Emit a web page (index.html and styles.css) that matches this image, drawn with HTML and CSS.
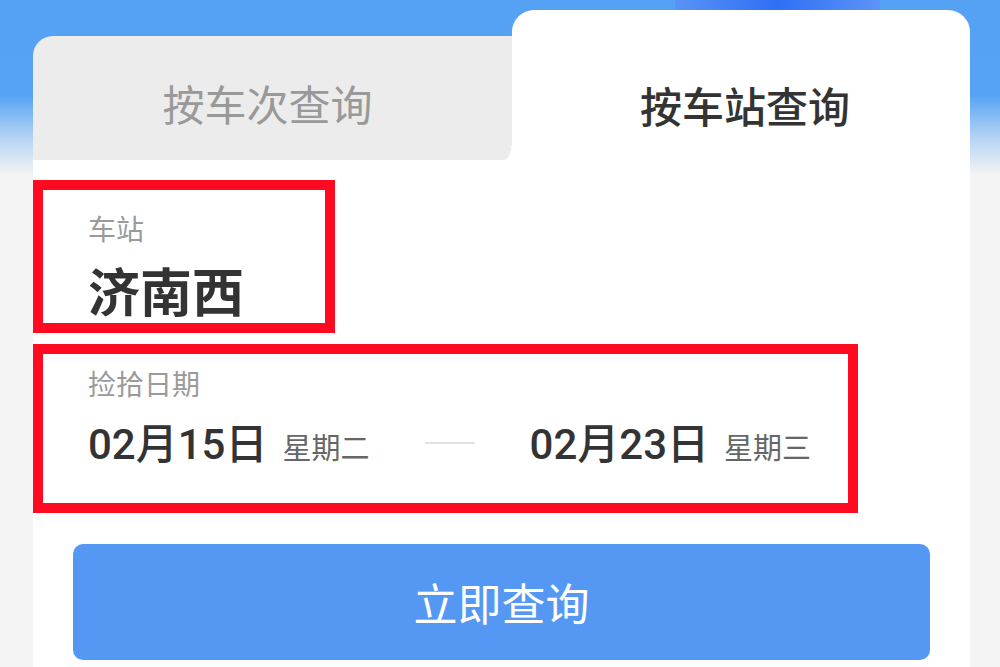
FILE: index.html
```html
<!DOCTYPE html>
<html lang="zh-CN">
<head>
<meta charset="utf-8">
<title>按车站查询</title>
<link rel="stylesheet" href="styles.css">
</head>
<body>
<div class="page">
  <div class="deco"></div>
  <div class="card">
    <div class="tabs">
      <div class="tab tab-off">按车次查询</div>
      <div class="tab tab-on">按车站查询</div>
    </div>
    <div class="body">
      <div class="box box-station">
        <div class="label">车站</div>
        <div class="station">济南西</div>
      </div>
      <div class="box box-date">
        <div class="label">捡拾日期</div>
        <div class="dates">
          <div class="date"><span class="day">02月15日</span><span class="week">星期二</span></div>
          <div class="dash"></div>
          <div class="date"><span class="day">02月23日</span><span class="week">星期三</span></div>
        </div>
      </div>
      <div class="btn">立即查询</div>
    </div>
  </div>
</div>
</body>
</html>
```
FILE: styles.css
```css
html, body {
  margin: 0;
  padding: 0;
}
body {
  width: 1000px;
  height: 667px;
  overflow: hidden;
  font-family: "Noto Sans CJK SC", "Noto Sans", sans-serif;
  background: linear-gradient(180deg, #55a2f4 0px, #55a3f5 95px, #b9d5f3 140px, #f4f4f4 175px, #f4f4f4 100%);
}
.page {
  position: relative;
  padding: 10px 30px 0 33px;
}
.deco {
  position: absolute;
  top: 0;
  left: 675px;
  width: 205px;
  height: 10px;
  background: linear-gradient(90deg, #5a93f5 0%, #2f6ff5 50%, #5c95f6 100%);
}
.card {
  position: relative;
  width: 937px;
}
.tabs {
  display: grid;
  grid-template-columns: 479px 1fr;
  height: 150px;
}
.tab {
  display: flex;
  align-items: center;
  justify-content: center;
  font-size: 42px;
  letter-spacing: 0;
}
.tab-off {
  margin-top: 26px;
  margin-right: -20px;
  padding-right: 30px;
  padding-top: 8px;
  background: #ececec;
  color: #999999;
  border-radius: 20px 0 0 0;
}
.tab-on {
  position: relative;
  background: #ffffff;
  color: #333333;
  font-weight: 500;
  border-radius: 22px 22px 0 0;
  padding-left: 8px;
  padding-top: 38px;
}
.tab-on::before {
  content: "";
  position: absolute;
  left: -8px;
  bottom: 0;
  width: 8px;
  height: 20px;
  background: radial-gradient(ellipse 8px 20px at 0 0, transparent 98%, #ffffff 100%);
}
.body {
  background: #ffffff;
  padding: 20px 0 20px 0;
  height: 500px;
}
.box {
  box-sizing: border-box;
  border: 10px solid #ff0a20;
  padding-left: 45px;
  display: flex;
  flex-direction: column;
}
.box-station {
  width: 302px;
  height: 153px;
  padding-top: 20px;
}
.box-date {
  width: 825px;
  height: 169px;
  margin-top: 11px;
  padding-top: 11px;
}
.label {
  font-size: 28px;
  line-height: 36px;
  color: #9a9a9a;
}
.station {
  margin-top: 14px;
  font-size: 52px;
  line-height: 60px;
  font-weight: 700;
  color: #333333;
}
.dates {
  display: flex;
  align-items: center;
  margin-top: 9px;
  height: 60px;
}
.date {
  display: flex;
  align-items: baseline;
}
.day {
  font-family: "Roboto", "Noto Sans CJK SC", sans-serif;
  font-size: 42px;
  font-weight: 500;
  color: #333333;
}
.week {
  font-size: 29px;
  color: #666666;
  margin-left: 15px;
}
.dash {
  width: 50px;
  height: 2px;
  background: #e3e3e3;
  margin: 6px 55px 0 55px;
}
.btn {
  margin: 31px 0 0 40px;
  width: 857px;
  height: 116px;
  border-radius: 10px;
  background: #5598f4;
  color: #ffffff;
  font-size: 44px;
  display: flex;
  align-items: center;
  justify-content: center;
}
```
